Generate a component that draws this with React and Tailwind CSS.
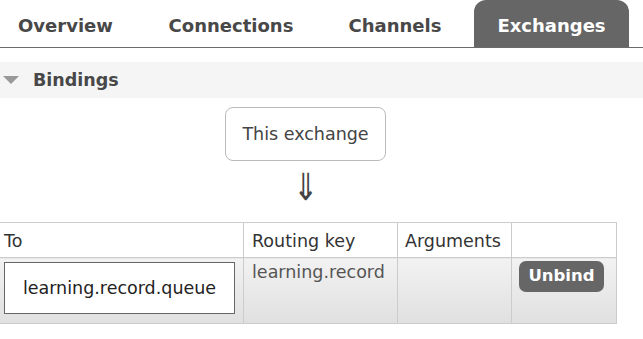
const tabs = [
  { label: 'Overview', w: 'w-[131px]' },
  { label: 'Connections', w: 'w-[200px]' },
  { label: 'Channels', w: 'w-[128px]' },
];

export default function App() {
  return (
    <div className="w-[643px] h-[339px] overflow-hidden bg-white text-[#444] font-['DejaVu_Sans',Verdana,sans-serif]">
      {/* tabs */}
      <nav className="flex h-[48px] border-b border-[#6b6b6b]">
        {tabs.map(t => (
          <div key={t.label} className={`${t.w} h-[47px] flex items-center justify-center pt-[4px] text-[18px] font-bold text-[#484848]`}>
            {t.label}
          </div>
        ))}
        <div className="ml-[15px] w-[155px] h-[47px] flex items-center justify-center pt-[4px] rounded-t-[12px] bg-[#666] text-[18px] font-bold text-white">
          Exchanges
        </div>
      </nav>

      {/* section header */}
      <div className="mt-[14px] h-[36px] bg-[#f5f5f5] flex items-center">
        <svg width="16" height="8" viewBox="0 0 16 8" className="ml-[3px]">
          <polygon points="0,0 16,0 8,8" fill="#999" />
        </svg>
        <span className="ml-[14px] text-[17.5px] font-bold text-[#484848]">Bindings</span>
      </div>

      <div className="mt-[9px] ml-[225px] w-[161px] h-[54px] flex items-center justify-center rounded-[8px] border border-[#bbb] text-[17.5px] text-[#444]">
        This exchange
      </div>
      <div className="h-[61px] w-[611px] flex justify-center pt-[8px] text-[30px] leading-none text-[#444]">
        <span className="inline-block scale-y-[1.25] origin-top">⇓</span>
      </div>

      <table className="-ml-[5px] w-[622px] border-collapse text-[17.5px]">
        <thead>
          <tr className="h-[35px]">
            <th className="w-[246px] border border-[#ccc] px-[8px] pt-[2px] text-left font-normal text-[#333]">To</th>
            <th className="w-[154px] border border-[#ccc] px-[8px] pt-[2px] text-left font-normal text-[#333]">Routing key</th>
            <th className="w-[114px] border border-[#ccc] px-[7px] pt-[2px] text-left font-normal text-[#333]">Arguments</th>
            <th className="border border-[#ccc]"></th>
          </tr>
        </thead>
        <tbody>
          <tr className="h-[66px]">
            <td className="border border-[#ccc] bg-linear-to-b from-[#f2f2f2] to-[#e0e0e0] px-[8px] py-[4px] align-top">
              <div className="w-[231px] h-[52px] flex items-center justify-center border border-[#666] bg-white text-[#222]">
                learning.record.queue
              </div>
            </td>
            <td className="border border-[#ccc] bg-linear-to-b from-[#f2f2f2] to-[#e0e0e0] px-[8px] pt-[1px] align-top text-[#555]">
              learning.record
            </td>
            <td className="border border-[#ccc] bg-linear-to-b from-[#f2f2f2] to-[#e0e0e0]"></td>
            <td className="border border-[#ccc] bg-linear-to-b from-[#f2f2f2] to-[#e0e0e0] pl-[7px] pt-[3px] align-top">
              <button className="w-[85px] h-[31px] rounded-[7px] bg-[#666] text-[16.5px] font-bold text-white">
                Unbind
              </button>
            </td>
          </tr>
        </tbody>
      </table>
    </div>
  );
}
